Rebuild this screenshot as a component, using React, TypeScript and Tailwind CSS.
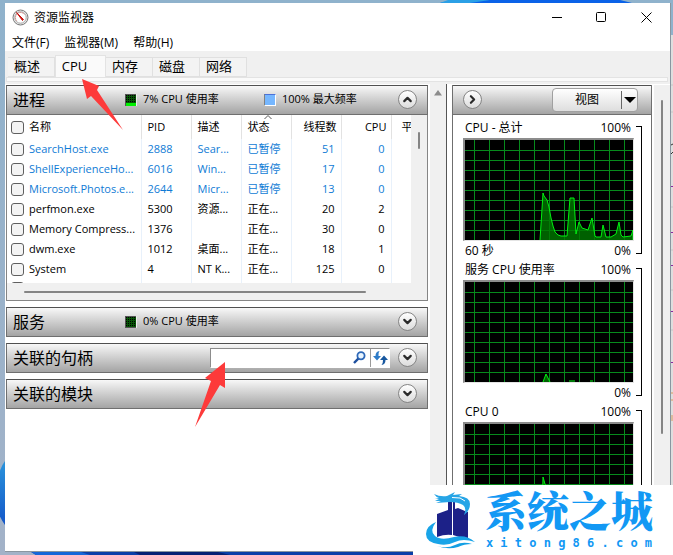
import type { ReactNode } from "react";
import { ChevronDown, ChevronRight, ChevronUp } from "lucide-react";

const menus = ["文件(F)", "监视器(M)", "帮助(H)"];

const tabs = ["概述", "CPU", "内存", "磁盘", "网络"];

const processes = [
    { name: "SearchHost.exe", pid: 2888, desc: "Sear...", status: "已暂停", threads: 51, cpu: 0, suspended: true },
    { name: "ShellExperienceHo...", pid: 6016, desc: "Win...", status: "已暂停", threads: 17, cpu: 0, suspended: true },
    { name: "Microsoft.Photos.e...", pid: 2644, desc: "Micr...", status: "已暂停", threads: 13, cpu: 0, suspended: true },
    { name: "perfmon.exe", pid: 5300, desc: "资源...", status: "正在...", threads: 20, cpu: 2, suspended: false },
    { name: "Memory Compress...", pid: 1376, desc: "", status: "正在...", threads: 30, cpu: 0, suspended: false },
    { name: "dwm.exe", pid: 1012, desc: "桌面...", status: "正在...", threads: 18, cpu: 1, suspended: false },
    { name: "System", pid: 4, desc: "NT K...", status: "正在...", threads: 125, cpu: 0, suspended: false },
];

const graphs = [
    {
        title: "CPU - 总计",
        footer: "60 秒",
        lines: [
            "75,100 78,53 79,56 82,60 84,67 86,78 88,86 90,92 93,95 96,96 102,96 105,58 109,58 111,94 114,82 117,88 123,90 127,78 130,96 131,97 136,97 138,85 141,97 146,97 151,94 154,82 156,95 158,97 166,96 168,90 168,100",
        ],
    },
    {
        title: "服务 CPU 使用率",
        footer: "",
        lines: ["78,100 81,92 85,100", "104,99 110,99", "125,99 128,99"],
    },
    {
        title: "CPU 0",
        footer: "",
        lines: ["77,100 78,53 80,60 84,67 86,80 90,92 96,96 102,96 105,70 109,70 111,94 168,97 168,100"],
    },
];

const gridX = [9, 24, 39, 54, 69, 84, 99, 114, 129, 144, 159];
const gridY = [10, 20, 30, 40, 50, 60, 70, 80, 90];

function RoundButton({ label, children }: { label: string; children: ReactNode }) {
    return (
        <button
            type="button"
            aria-label={label}
            className="flex size-[19px] shrink-0 items-center justify-center rounded-full border border-[#858585] bg-gradient-to-b from-white to-[#dcdcdc] text-[#2b2b2b]"
        >
            {children}
        </button>
    );
}

function SectionHeader({ title, open, children }: { title: string; open?: boolean; children?: ReactNode }) {
    return (
        <div className="flex h-[30px] items-center border border-[#6f6f6f] border-t-[#505050] bg-gradient-to-b from-[#f8f8f8] to-[#a4a4a4] pr-[10px] pb-px pl-1.5">
            <h2 className="w-28 shrink-0 text-base leading-6 whitespace-nowrap">{title}</h2>
            <div className="flex min-w-0 flex-1 items-center">{children}</div>
            <RoundButton label={open ? "折叠" : "展开"}>
                {open ? <ChevronUp size={13} strokeWidth={4} /> : <ChevronDown size={13} strokeWidth={4} />}
            </RoundButton>
        </div>
    );
}

function UsageSwatch({ active }: { active?: boolean }) {
    return (
        <svg viewBox="0 0 12 12" className="size-3 shrink-0" shapeRendering="crispEdges" aria-hidden="true">
            <rect width="12" height="12" fill="#eee" />
            <rect width="11" height="12" fill="#555" />
            <rect x="1" y="1" width="10" height="10" fill="#000" />
            <path d="M2.5 1v10M4.5 1v10M6.5 1v10M8.5 1v10M10.5 1v10M1 2.5h10M1 4.5h10M1 6.5h10M1 8.5h10M1 10.5h10" stroke="#087808" strokeOpacity="0.7" />
            {active && <rect x="1" y="9" width="10" height="3" fill="#00f000" />}
        </svg>
    );
}

function Checkbox({ label }: { label: string }) {
    return (
        <input
            type="checkbox"
            aria-label={label}
            className="block size-[13px] appearance-none rounded-[3px] border border-[#5f5f5f] bg-[#f4f4f4]"
        />
    );
}

function ProcessTable() {
    return (
        <div className="flex bg-[#f0f0f0]">
            <div className="h-[168px] min-w-0 flex-1 overflow-hidden bg-white">
                <table className="w-full table-fixed border-collapse text-[11px] leading-5 whitespace-nowrap">
                    <colgroup>
                        <col className="w-[134px]" />
                        <col className="w-[50px]" />
                        <col className="w-[50px]" />
                        <col className="w-[50px]" />
                        <col className="w-[50px]" />
                        <col className="w-[50px]" />
                        <col />
                    </colgroup>
                    <thead>
                        <tr className="h-6 text-left">
                            <th className="border-r border-[#e2e2e2] p-0 pl-1 font-normal">
                                <div className="flex items-center gap-[5px]">
                                    <Checkbox label="全选" />
                                    名称
                                </div>
                            </th>
                            <th className="border-r border-[#e2e2e2] p-0 pl-1.5 font-normal">PID</th>
                            <th className="border-r border-[#e2e2e2] p-0 pl-1.5 font-normal">描述</th>
                            <th className="relative border-r border-[#e2e2e2] p-0 pl-1.5 font-normal">
                                <svg viewBox="0 0 8 4" className="absolute top-0 left-[22px] h-1 w-2" aria-hidden="true">
                                    <path d="M.5 4 4 .5 7.5 4" fill="none" stroke="#555" />
                                </svg>
                                状态
                            </th>
                            <th className="border-r border-[#e2e2e2] p-0 pr-1 text-right font-normal">线程数</th>
                            <th className="border-r border-[#e2e2e2] p-0 pr-1 text-right font-normal">CPU</th>
                            <th className="overflow-hidden p-0 pl-[10px] font-normal">平</th>
                        </tr>
                    </thead>
                    <tbody>
                        {processes.map((p) => (
                            <tr key={p.pid} className={p.suspended ? "h-5 text-[#0f7bd5]" : "h-5"}>
                                <td className="border-r border-[#e8f1fb] p-0 pl-1">
                                    <label className="flex items-center gap-[5px]">
                                        <Checkbox label={p.name} />
                                        {p.name}
                                    </label>
                                </td>
                                <td className="border-r border-[#e8f1fb] p-0 pl-1.5">{p.pid}</td>
                                <td className="border-r border-[#e8f1fb] p-0 pl-1.5">{p.desc}</td>
                                <td className="border-r border-[#e8f1fb] p-0 pl-1.5">{p.status}</td>
                                <td className="border-r border-[#e8f1fb] p-0 pr-1.5 text-right">{p.threads}</td>
                                <td className="border-r border-[#e8f1fb] p-0 pr-1.5 text-right">{p.cpu}</td>
                                <td />
                            </tr>
                        ))}
                        <tr className="h-5">
                            <td className="border-r border-[#e8f1fb] p-0 pt-[3px] pl-1 align-top">
                                <Checkbox label="进程" />
                            </td>
                            <td className="border-r border-[#e8f1fb]" />
                            <td className="border-r border-[#e8f1fb]" />
                            <td className="border-r border-[#e8f1fb]" />
                            <td className="border-r border-[#e8f1fb]" />
                            <td className="border-r border-[#e8f1fb]" />
                            <td />
                        </tr>
                    </tbody>
                </table>
            </div>
            <div className="w-4 shrink-0 pt-[17px] pl-[7px]">
                <div className="h-[17px] w-0.5 rounded-full bg-[#858585]" />
            </div>
        </div>
    );
}

function Graph({ title, footer, lines }: { title: string; footer: string; lines: string[] }) {
    return (
        <div className="flex gap-0.5 text-xs">
            <div className="min-w-0 flex-1">
                <div className="flex h-5 items-center justify-between pr-[3px] pl-0.5">
                    <span>{title}</span>
                    <span>100%</span>
                </div>
                <div className="h-[103px] border-t-2 border-r border-b border-l-2 border-[#8c8c8c] border-r-[#e4e4e4] border-b-[#e4e4e4] bg-black">
                    <svg viewBox="0 0 168 100" preserveAspectRatio="none" className="block h-full w-full" role="img" aria-label={title}>
                        <g stroke="#078a1c" shapeRendering="crispEdges">
                            {gridX.map((x) => (
                                <line key={x} x1={x + 0.5} x2={x + 0.5} y1="0" y2="100" />
                            ))}
                            {gridY.map((y) => (
                                <line key={y} x1="0" x2="168" y1={y + 0.5} y2={y + 0.5} />
                            ))}
                        </g>
                        {lines.map((points) => (
                            <polyline key={points} points={points} fill="#007800" fillOpacity="0.8" stroke="#00f010" />
                        ))}
                    </svg>
                </div>
                <div className="flex h-[19px] items-center justify-between pr-[3px] pl-0.5">
                    <span>{footer}</span>
                    <span>0%</span>
                </div>
            </div>
            <div className="mt-2 mb-1.5 w-1.5 border border-l-0 border-black" />
        </div>
    );
}

function Wallpaper() {
    return (
        <svg viewBox="0 0 673 555" preserveAspectRatio="none" className="absolute inset-0 h-full w-full" aria-hidden="true">
            <defs>
                <linearGradient id="sky" x1="0" y1="0" x2="0" y2="1">
                    <stop offset="0" stopColor="#8fb2cc" />
                    <stop offset="1" stopColor="#a3b2c8" />
                </linearGradient>
                <linearGradient id="bloom" x1="0" y1="0" x2="0" y2="1">
                    <stop offset="0" stopColor="#2a94dc" />
                    <stop offset="1" stopColor="#1456c8" />
                </linearGradient>
            </defs>
            <rect width="673" height="555" fill="url(#sky)" />
            <path d="M440 3Q470-5 540 0H620L632 3Z" fill="#0a62e8" />
            <path d="M440 3 448 0H490L470 3Z" fill="#2ba0e6" />
            <path d="M5 461Q-2 470-4 490T5 525Z" fill="url(#bloom)" />
            <path d="M28 550 36 555H413V550Z" fill="#0a3fa8" />
            <path d="M28 550 36 555H90L75 550Z" fill="#1667d8" />
            <path d="M130 550H210L230 555H140Z" fill="#052074" />
            <rect x="669" y="35" width="4" height="520" fill="#dedede" />
            <path d="M669 85h4M669 112h4M669 207h4M669 250h4M669 290h4M669 330h4" stroke="#c6c6c6" />
            <path d="M669 186.5h4M669 232.5h4M669 265.5h4M669 311.5h4M669 362.5h4" stroke="#8a27a0" />
            <path d="M671 145l2-1M671 154l2-2" stroke="#333" />
            <path d="M671 393h2M671 400h2M672 415v6" stroke="#d89a60" />
        </svg>
    );
}

function SiteLogo() {
    return (
        <div className="absolute right-0 bottom-0 flex h-[70px] w-[260px] bg-white pt-1.5 pl-[13px]">
            <svg viewBox="0 0 50 58" className="h-[58px] w-[50px] shrink-0" aria-hidden="true">
                {/* towers */}
                <path d="M11 23 22 19V10l4-1v35q-7-1-15 2Z" fill="#1c2188" />
                <path d="M27 9.500 29 11v7l3-1 7 3v1h3v26q-8 0-15-3Z" fill="#1c2188" />
                {/* dragon */}
                <path d="M8 3q6 3 13 2l8-4-2 3 9-1-3 2q11 1 11 8t-6 11q3-7-1-10-5-3-13-3l-14 1 5-2H9l4-2H9l4-1q-3-1-5-4Z" fill="#27a5e6" />
                <path d="m26 6.500 8 .5 5 3" fill="none" stroke="#fff" />
                {/* waves */}
                <path d="M10 31Q0 35 0 43t12 10q9 2 17-2t20 0Q40 43 28 46 15 50 9 45 3 40 10 31Z" fill="#18a4e8" />
                <path d="M11 55q10 3 18-1t17-1q-8 0-14 3-10 3-21-1Z" fill="#139fe4" />
            </svg>
            <div className="flex flex-col items-center gap-2 pl-[9px] text-[#1298f4]">
                <span className="font-['Noto_Serif_CJK_SC','Noto_Sans_CJK_SC',serif] text-[42px] leading-9 font-black">
                    系统之城
                </span>
                <span className="font-['DejaVu_Sans_Mono',monospace] text-xs leading-4 font-bold whitespace-nowrap">
                    x i t o n g 8 6 . c o m
                </span>
            </div>
        </div>
    );
}

export default function App() {
    return (
        <div className="relative flex min-h-screen flex-col overflow-hidden pt-[3px] pr-0.5 pb-[3px] pl-[5px] font-['Open_Sans','Noto_Sans_CJK_SC',sans-serif] text-black">
            <Wallpaper />

            <main className="relative flex flex-1 flex-col border-r border-b border-[#8a96a0] bg-white">
                {/* Title bar */}
                <header className="flex h-7 items-center pl-[7px]">
                    <svg viewBox="0 0 17 17" className="size-[17px]" aria-hidden="true">
                        <circle cx="8.5" cy="8.5" r="7.5" fill="#e8e8e8" stroke="#777" />
                        <circle cx="8.5" cy="8.5" r="5.7" fill="#fff" stroke="#a9a9a9" />
                        <path d="M4.5 11.5a5 5 0 0 1 8-6" fill="none" stroke="#cf6a65" strokeDasharray="1 1" />
                        <path d="m4.5 3.5 6 8 1-1Z" fill="#c91410" stroke="#c91410" />
                    </svg>
                    <h1 className="pt-px pl-[5px] text-xs">资源监视器</h1>
                    <div className="ml-auto flex pr-px">
                        <button type="button" aria-label="最小化" className="flex h-7 w-[45px] items-center justify-center">
                            <svg viewBox="0 0 11 11" className="size-[11px]" shapeRendering="crispEdges" aria-hidden="true">
                                <path d="M.5 5.500h10" stroke="#000" />
                            </svg>
                        </button>
                        <button type="button" aria-label="最大化" className="flex h-7 w-[45px] items-center justify-center">
                            <svg viewBox="0 0 11 11" className="size-[11px]" aria-hidden="true">
                                <rect x=".5" y=".5" width="9" height="9" rx="1" fill="none" stroke="#000" />
                            </svg>
                        </button>
                        <button type="button" aria-label="关闭" className="flex h-7 w-[45px] items-center justify-center">
                            <svg viewBox="0 0 11 11" className="size-[11px]" aria-hidden="true">
                                <path d="m.5.5 10 10M10.500.5l-10 10" stroke="#000" />
                            </svg>
                        </button>
                    </div>
                </header>

                {/* Menu */}
                <nav className="flex h-5 items-center gap-[15px] pt-[3px] pl-[7px] text-xs">
                    {menus.map((menu) => (
                        <button key={menu} type="button">
                            {menu}
                        </button>
                    ))}
                </nav>

                {/* Tabs */}
                <div className="bg-[#f0f0f0] pt-1 pb-0.5">
                    <div role="tablist" className="flex h-[22px] items-end pl-[3px] text-[13px]">
                        {tabs.map((tab) =>
                            tab === "CPU" ? (
                                <button
                                    key={tab}
                                    type="button"
                                    role="tab"
                                    aria-selected="true"
                                    className="h-[22px] w-[51px] border border-b-0 border-[#e3e3e3] bg-[#fafafa] pr-3 pb-0.5 leading-5"
                                >
                                    {tab}
                                </button>
                            ) : (
                                <button
                                    key={tab}
                                    type="button"
                                    role="tab"
                                    aria-selected="false"
                                    className="h-5 w-[47px] border border-l-0 border-[#e0e0e0] bg-[#f3f3f3] pr-2 pb-0.5 leading-4"
                                >
                                    {tab}
                                </button>
                            ),
                        )}
                    </div>
                    <div className="mr-0.5 ml-px h-[5px] border border-[#e3e3e3] bg-[#fafafa]" />
                </div>

                <div className="flex flex-1">
                    {/* Left pane */}
                    <div className="flex min-w-0 flex-1 flex-col gap-1.5 pt-px pr-0.5 pl-px">
                        <section>
                            <SectionHeader title="进程" open>
                                <div className="flex items-center gap-1.5 text-[11px] whitespace-nowrap">
                                    <UsageSwatch active />
                                    <span className="w-[115px]">7% CPU 使用率</span>
                                    <span className="size-3 border border-[#808080] border-t-[#4b70d8] border-r-white border-b-white bg-[#76b7ff]" />
                                    <span>100% 最大频率</span>
                                </div>
                            </SectionHeader>
                            <div className="border-x border-b border-[#858585]">
                                <ProcessTable />
                                <div className="h-[17px] bg-[#f0f0f0] pt-2 pr-[61px] pl-[17px]">
                                    <div className="h-0.5 rounded-full bg-[#858585]" />
                                </div>
                            </div>
                        </section>

                        <SectionHeader title="服务">
                            <div className="flex items-center gap-1.5 text-[11px] whitespace-nowrap">
                                <UsageSwatch />
                                <span>0% CPU 使用率</span>
                            </div>
                        </SectionHeader>

                        <SectionHeader title="关联的句柄">
                            <div className="mr-2 ml-auto flex h-5 w-[180px] items-center border border-[#8c8c8c] border-r-white border-b-white bg-white">
                                <input type="text" aria-label="搜索句柄" className="h-full min-w-0 flex-1 px-1 text-xs outline-none" />
                                <button type="button" aria-label="搜索" className="px-1">
                                    <svg viewBox="0 0 13 13" className="size-[13px]" aria-hidden="true">
                                        <circle cx="8" cy="4.8" r="3.6" fill="#e9f5ff" stroke="#2d68b8" strokeWidth="1.8" />
                                        <path d="M5.3 7.6 1 12" stroke="#1d4f9e" strokeWidth="2.4" />
                                    </svg>
                                </button>
                                <button type="button" aria-label="刷新" className="flex h-[18px] items-center border-l border-[#9a9a9a] pr-px pl-0.5">
                                    <svg viewBox="0 0 15 14" className="h-3.5 w-[15px]" aria-hidden="true">
                                        <path d="M6.500 0Q2.500.5 2.500 5H0l4 4.500L8 5H5.500Q5 2 6.500 0Z" fill="#2e7cc8" />
                                        <path d="M8.500 14q4-.5 4-5H15l-4-4.500L7 9h3q.2 3-1.500 5Z" fill="#17579f" />
                                    </svg>
                                </button>
                            </div>
                        </SectionHeader>

                        <SectionHeader title="关联的模块" />
                    </div>

                    <div className="w-4 shrink-0 bg-[#f0f0f0] pt-1.5">
                        <svg viewBox="0 0 8 6" className="mx-auto h-1.5 w-2" aria-hidden="true">
                            <path d="M4 0 8 5.500H0Z" fill="#8c8c8c" />
                        </svg>
                    </div>

                    {/* Right pane */}
                    <div className="flex w-[224px] shrink-0 border-l border-[#555] pt-px pl-[5px]">
                        <aside className="min-w-0 flex-1 border-x border-[#6f6f6f]">
                            <div className="flex h-[30px] items-center justify-between border-t border-b border-[#6f6f6f] border-t-[#505050] bg-gradient-to-b from-[#f8f8f8] to-[#a4a4a4] pr-[13px] pb-px pl-[10px]">
                                <RoundButton label="展开">
                                    <ChevronRight size={13} strokeWidth={4} />
                                </RoundButton>
                                <div className="flex h-6 w-[86px] items-center rounded border border-[#a0a0a0] bg-gradient-to-b from-white to-[#dedede]">
                                    <button type="button" className="flex-1 text-xs">
                                        视图
                                    </button>
                                    <button type="button" aria-label="视图选项" className="flex h-[18px] w-4 items-center border-l border-[#666] pl-0.5">
                                        <svg viewBox="0 0 12 6" className="h-1.5 w-3" aria-hidden="true">
                                            <path d="M0 0h12L6 6Z" />
                                        </svg>
                                    </button>
                                </div>
                            </div>
                            <div className="pt-[3px] pr-[9px] pl-[10px]">
                                {graphs.map((graph) => (
                                    <Graph key={graph.title} title={graph.title} footer={graph.footer} lines={graph.lines} />
                                ))}
                            </div>
                        </aside>
                        <div className="ml-0.5 w-4 shrink-0 bg-[#f0f0f0] pt-[15px] pl-[7px]">
                            <div className="h-[334px] w-0.5 rounded-full bg-[#858585]" />
                        </div>
                    </div>
                </div>
            </main>

            {/* Callout arrows */}
            <svg viewBox="0 0 41 52" className="absolute top-[79px] left-[82px] h-[52px] w-[41px]" aria-hidden="true">
                <path d="M0 0 17 7 15 11 41 51 9 17 5 20Z" fill="#fd3a3a" />
            </svg>
            <svg viewBox="0 0 30 65" className="absolute top-[362px] left-[195px] h-[65px] w-[30px]" aria-hidden="true">
                <path d="M30 0V26L25 23 0 65 16 19 10 16Z" fill="#fd3a3a" />
            </svg>

            <SiteLogo />
        </div>
    );
}
